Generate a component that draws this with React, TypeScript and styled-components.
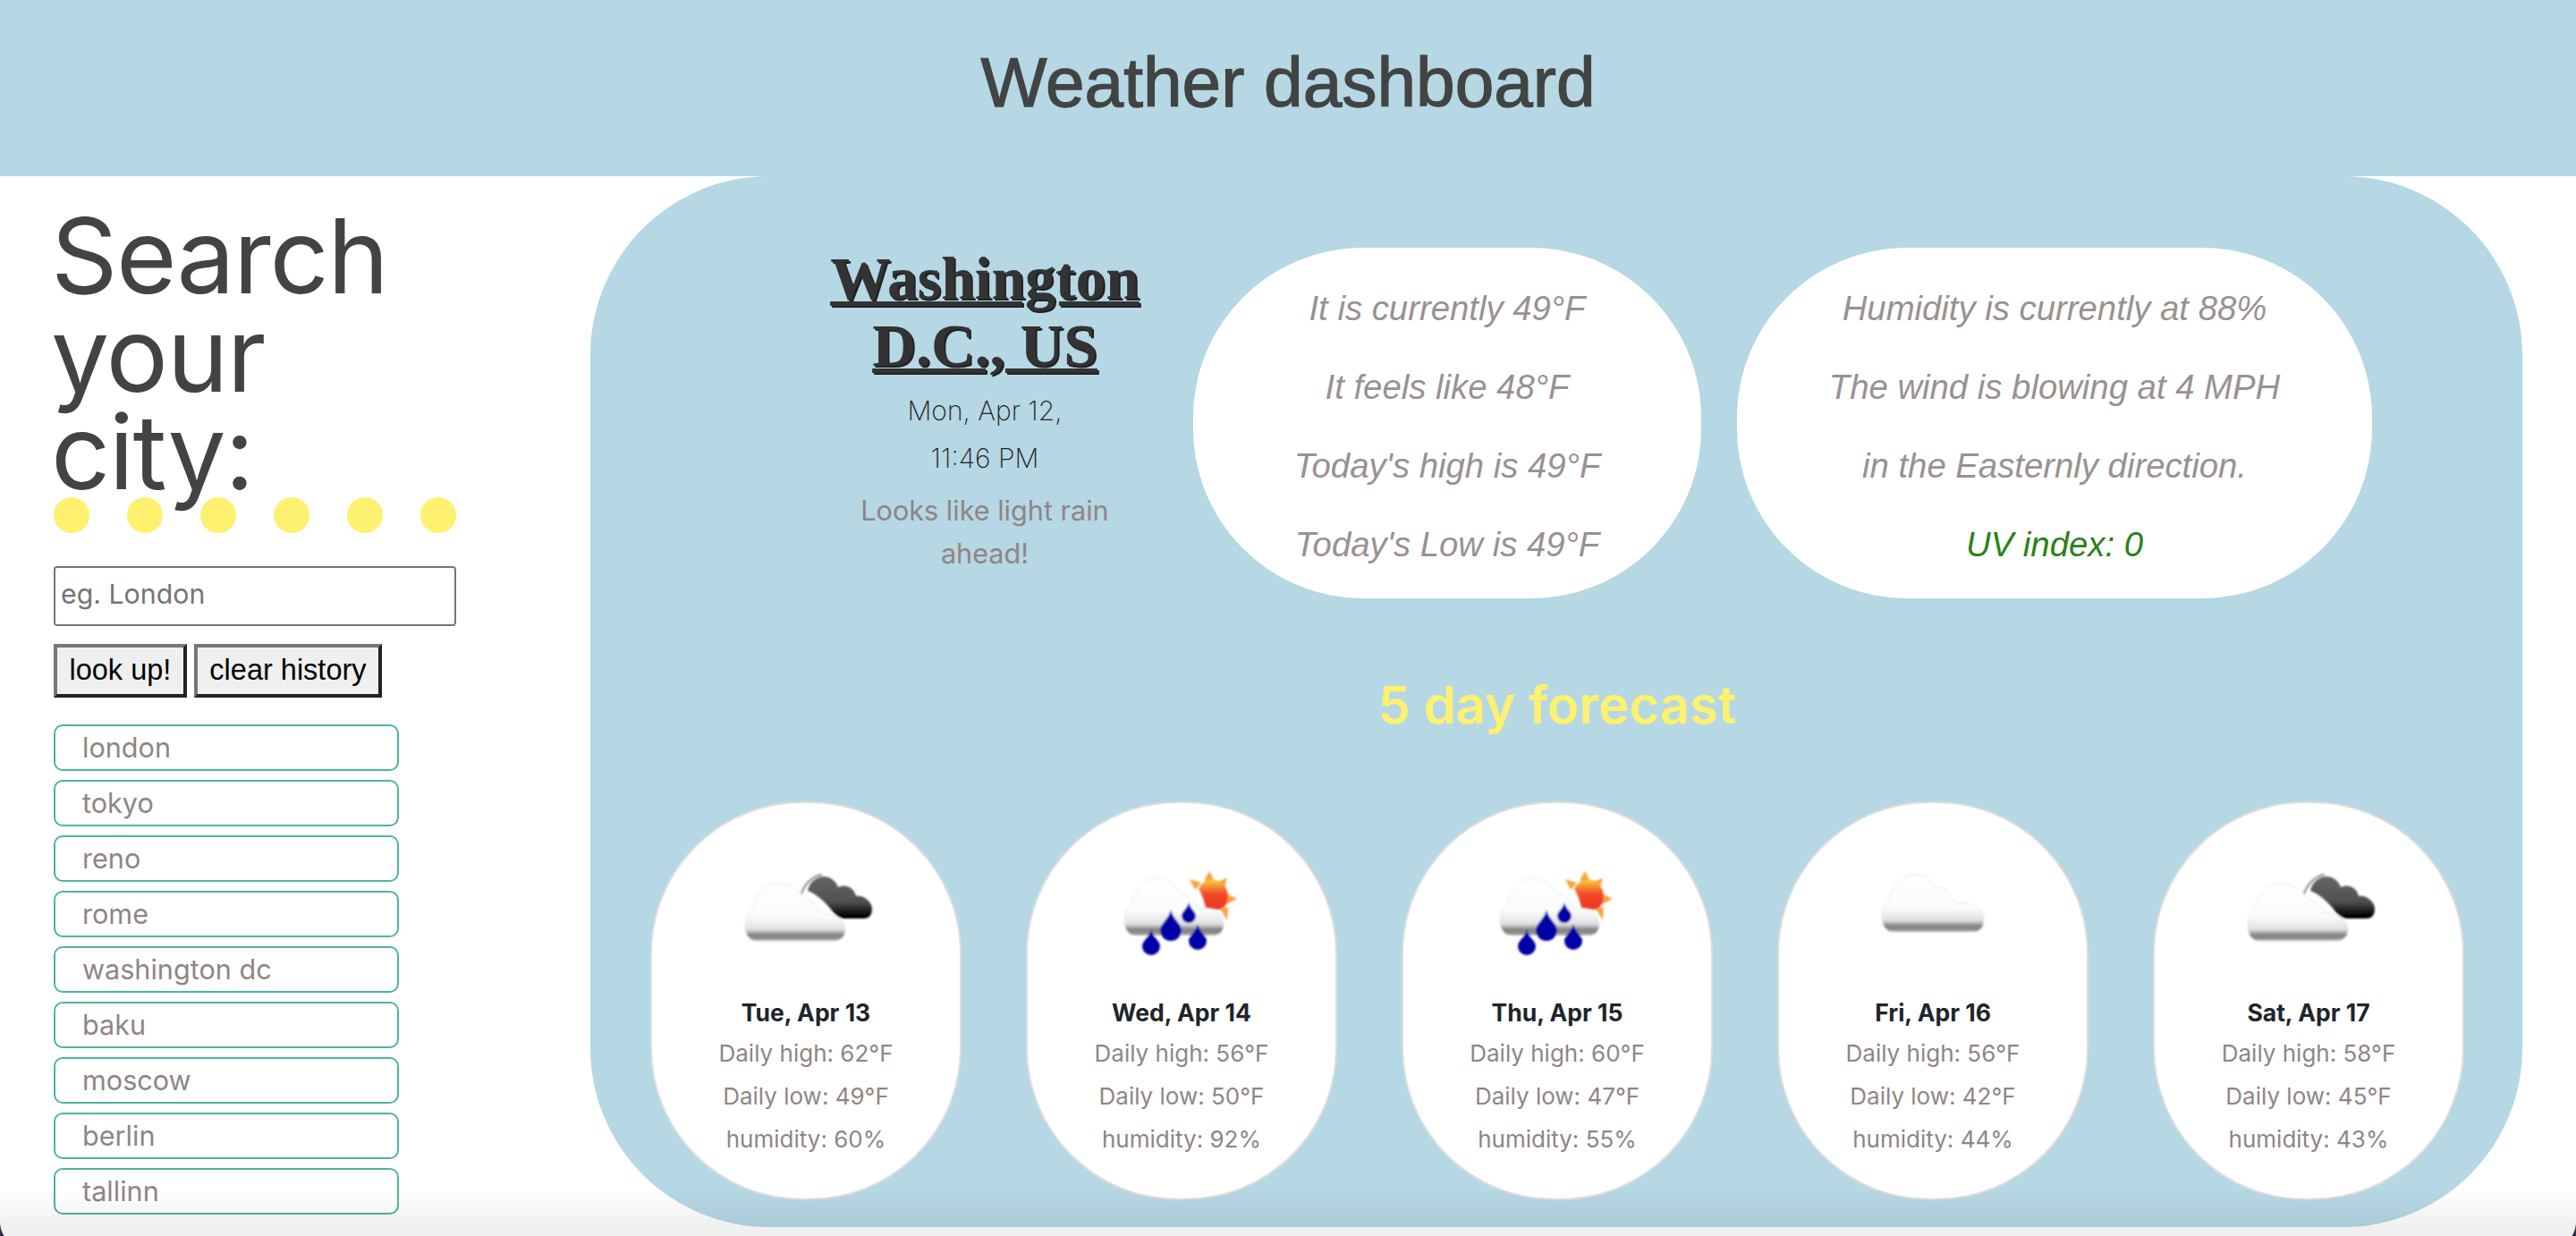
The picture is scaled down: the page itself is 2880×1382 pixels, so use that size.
import React from "react";
import styled, { createGlobalStyle } from "styled-components";

const sky = "#b6d7e4";
const sun = "#fff170";
const muted = "#8f8585";
const helvetica = `"Liberation Sans", Arial, sans-serif`;

const GlobalStyle = createGlobalStyle`
  html, body {
    margin: 0;
    padding: 0;
    height: 100%;
    overflow: hidden;
    background: #fff;
  }
  * {
    box-sizing: border-box;
  }
  body {
    font-family: Inter, "Liberation Sans", sans-serif;
  }
`;

const cities = ["london", "tokyo", "reno", "rome", "washington dc", "baku", "moscow", "berlin", "tallinn"];

type IconKind = "night" | "rain" | "cloud";

const forecast: { date: string; high: number; low: number; humidity: number; icon: IconKind }[] = [
  { date: "Tue, Apr 13", high: 62, low: 49, humidity: 60, icon: "night" },
  { date: "Wed, Apr 14", high: 56, low: 50, humidity: 92, icon: "rain" },
  { date: "Thu, Apr 15", high: 60, low: 47, humidity: 55, icon: "rain" },
  { date: "Fri, Apr 16", high: 56, low: 42, humidity: 44, icon: "cloud" },
  { date: "Sat, Apr 17", high: 58, low: 45, humidity: 43, icon: "night" },
];

const SharedDefs = () => (
  <HiddenSvg width="0" height="0">
    <defs>
      <linearGradient id="whiteCloud" x1="0" y1="0" x2="0" y2="1">
        <stop offset="0" stopColor="#ffffff" />
        <stop offset="0.58" stopColor="#fbfbfb" />
        <stop offset="0.8" stopColor="#e0e0e0" />
        <stop offset="0.9" stopColor="#808080" />
        <stop offset="1" stopColor="#a0a0a0" />
      </linearGradient>
      <linearGradient id="darkCloud" x1="0" y1="0" x2="0" y2="1">
        <stop offset="0" stopColor="#666666" />
        <stop offset="0.6" stopColor="#505050" />
        <stop offset="0.95" stopColor="#000000" />
      </linearGradient>
      <linearGradient id="sunBall" x1="0" y1="0" x2="0" y2="1">
        <stop offset="0" stopColor="#f9d23a" />
        <stop offset="0.5" stopColor="#f0452a" />
        <stop offset="1" stopColor="#ee3a24" />
      </linearGradient>
      <filter id="soft" x="-10%" y="-10%" width="120%" height="120%">
        <feGaussianBlur stdDeviation="1.1" />
      </filter>
    </defs>
  </HiddenSvg>
);

const Drop = ({ x, y, r }: { x: number; y: number; r: number }) => (
  <path
    d={`M${x} ${y - r * 1.9} C${x + r * 0.2} ${y - r} ${x + r} ${y - r * 0.6} ${x + r} ${y} A${r} ${r} 0 0 1 ${x - r} ${y} C${x - r} ${y - r * 0.6} ${x - r * 0.2} ${y - r} ${x} ${y - r * 1.9} Z`}
    fill="#0606a8"
  />
);

const WeatherIcon = ({ kind }: { kind: IconKind }) => {
  if (kind === "cloud") {
    return (
      <IconBox viewBox="0 0 160 110">
        <g filter="url(#soft)">
          <path
            d="M35 76 C27 76 23 68 23 60 C23 50 27 44 31 40 C33 26 46 12 61 12 C72 12 78 18 82 26 C90 24 98 30 100 38 C104 42 106 44 108 44 C124 42 137 50 137 62 C137 72 132 76 126 76 Z"
            fill="url(#whiteCloud)"
            stroke="#e6e6e6"
            strokeWidth="1"
          />
        </g>
      </IconBox>
    );
  }
  if (kind === "rain") {
    return (
      <IconBox viewBox="0 0 160 110">
        <g filter="url(#soft)">
          <path
            d="M28 80 C20 80 16 72 16 64 C16 54 20 48 24 44 C26 30 38 16 52 16 C64 16 72 24 78 32 C88 34 96 42 100 50 C114 48 127 56 127 68 C127 76 122 80 116 80 Z"
            fill="url(#whiteCloud)"
            stroke="#e6e6e6"
            strokeWidth="1"
          />
          <g fill="#f7a23c">
            <polygon points="111,8 105,19 117,19" />
            <polygon points="89,17 102,21 95,29" />
            <polygon points="131,16 120,20 127,29" />
            <polygon points="142,39 130,33 130,45" />
            <polygon points="131,63 123,50 132,48" />
          </g>
          <path
            d="M99 28 C103 19 114 15 122 19 C131 23 133 34 131 42 C129 49 124 51 120 51 L107 49 C105 40 103 34 99 28 Z"
            fill="url(#sunBall)"
          />
          <Drop x={46} y={92} r={10} />
          <Drop x={68} y={74} r={12} />
          <Drop x={88} y={58} r={8} />
          <Drop x={98} y={86} r={10} />
        </g>
      </IconBox>
    );
  }
  return (
    <IconBox viewBox="0 0 160 110">
      <g filter="url(#soft)">
        <path
          d="M82 30 C84 20 92 14 100 14 C108 14 114 20 116 26 C124 22 134 26 136 36 C144 34 154 42 154 50 C154 58 150 61 144 61 L122 61 C114 61 110 52 104 46 C98 40 92 34 82 30 Z"
          fill="url(#darkCloud)"
        />
        <path d="M74 37 C76 26 86 13 98 12" fill="none" stroke="#8a8a8a" strokeWidth="2" />
        <path
          d="M24 86 C16 86 12 78 12 70 C12 60 16 54 20 50 C22 34 34 22 50 22 C62 22 72 28 78 38 C88 42 96 50 100 56 C112 54 124 62 124 74 C124 82 118 86 112 86 Z"
          fill="url(#whiteCloud)"
          stroke="#e6e6e6"
          strokeWidth="1"
        />
      </g>
    </IconBox>
  );
};

export default function App() {
  return (
    <>
      <GlobalStyle />
      <SharedDefs />
      <Page>
        <Header>
          <HeaderTitle>Weather dashboard</HeaderTitle>
        </Header>
        <Body>
          <Sidebar>
            <SearchTitle>Search your city:</SearchTitle>
            <Dots>
              {Array.from({ length: 6 }).map((_, i) => (
                <Dot key={i} />
              ))}
            </Dots>
            <CityInput placeholder="eg. London" />
            <ButtonRow>
              <ActionButton>look up!</ActionButton>
              <ActionButton>clear history</ActionButton>
            </ButtonRow>
            <HistoryList>
              {cities.map((city) => (
                <HistoryItem key={city}>{city}</HistoryItem>
              ))}
            </HistoryList>
          </Sidebar>
          <Panel>
            <CurrentRow>
              <CityBlock>
                <CityName>Washington D.C., US</CityName>
                <DateLine>Mon, Apr 12,</DateLine>
                <DateLine>11:46 PM</DateLine>
                <Summary>Looks like light rain ahead!</Summary>
              </CityBlock>
              <Bubble $width={568}>
                <BubbleLine>It is currently 49°F</BubbleLine>
                <BubbleLine>It feels like 48°F</BubbleLine>
                <BubbleLine>Today's high is 49°F</BubbleLine>
                <BubbleLine>Today's Low is 49°F</BubbleLine>
              </Bubble>
              <Bubble $width={710}>
                <BubbleLine>Humidity is currently at 88%</BubbleLine>
                <BubbleLine>The wind is blowing at 4 MPH</BubbleLine>
                <BubbleLine>in the Easternly direction.</BubbleLine>
                <BubbleLine $good>UV index: 0</BubbleLine>
              </Bubble>
            </CurrentRow>
            <ForecastTitle>5 day forecast</ForecastTitle>
            <CardRow>
              {forecast.map((day) => (
                <Card key={day.date}>
                  <WeatherIcon kind={day.icon} />
                  <CardDate>{day.date}</CardDate>
                  <CardLine>Daily high: {day.high}°F</CardLine>
                  <CardLine>Daily low: {day.low}°F</CardLine>
                  <CardLine>humidity: {day.humidity}%</CardLine>
                </Card>
              ))}
            </CardRow>
          </Panel>
        </Body>
        <WindowEdge />
      </Page>
    </>
  );
}

const HiddenSvg = styled.svg`
  position: absolute;
`;

const Page = styled.div`
  position: relative;
  width: 2880px;
  height: 1382px;
  overflow: hidden;
  background: #fff;
`;

const Header = styled.header`
  height: 197px;
  display: flex;
  justify-content: center;
  align-items: flex-start;
  background: ${sky};
`;

const HeaderTitle = styled.h1`
  margin: 44px 0 0;
  font-family: ${helvetica};
  font-size: 78.4px;
  line-height: 97px;
  font-weight: 400;
  -webkit-text-stroke: 1.3px #424444;
  color: #424444;
`;

const Body = styled.div`
  display: flex;
  padding-right: 60px;
`;

const Sidebar = styled.aside`
  flex: 0 0 660px;
  padding: 35px 0 0 60px;
  display: flex;
  flex-direction: column;
  align-items: flex-start;
`;

const SearchTitle = styled.h2`
  width: 450px;
  margin: 0 0 0 -3px;
  font-size: 116px;
  line-height: 109.5px;
  font-weight: 400;
  letter-spacing: -1.4px;
  color: #424444;
`;

const Dots = styled.div`
  width: 450px;
  margin-top: -5px;
  display: flex;
  justify-content: space-between;
`;

const Dot = styled.span`
  width: 40px;
  height: 40px;
  border-radius: 50%;
  background: ${sun};
`;

const CityInput = styled.input`
  width: 450px;
  height: 67px;
  margin-top: 37px;
  padding: 0 6px 5px;
  border: 2px solid #767676;
  border-radius: 4px;
  font-family: inherit;
  font-size: 30.3px;
  outline: none;
  &::placeholder {
    color: #757575;
  }
`;

const ButtonRow = styled.div`
  display: flex;
  gap: 8px;
  margin-top: 20px;
`;

const ActionButton = styled.button`
  height: 60px;
  padding: 0 13.5px;
  border: 4px solid;
  border-color: #767676 #222 #222 #767676;
  background: #efefef;
  font-family: ${helvetica};
  font-size: 32.5px;
  color: #000;
`;

const HistoryList = styled.ul`
  list-style: none;
  margin: 30px 0 0;
  padding: 0;
  display: flex;
  flex-direction: column;
  gap: 10px;
`;

const HistoryItem = styled.li`
  width: 386px;
  height: 52px;
  padding-left: 30px;
  border: 2px solid #4fb3a0;
  border-radius: 10px;
  font-size: 30.6px;
  line-height: 48px;
  color: ${muted};
`;

const Panel = styled.main`
  flex: 1;
  height: 1175px;
  padding: 80px 65px 0 67px;
  border-radius: 200px;
  background: ${sky};
`;

const CurrentRow = styled.section`
  display: flex;
  align-items: flex-start;
`;

const CityBlock = styled.div`
  flex: none;
  width: 462px;
  margin: -3px 2px 0 143px;
  padding: 0 56px;
  text-align: center;
`;

const CityName = styled.h2`
  margin: 0 0 9px;
  font-family: "Liberation Serif", serif;
  font-size: 67.6px;
  line-height: 75px;
  font-weight: 700;
  text-decoration: underline;
  text-decoration-thickness: 5px;
  text-shadow: 2px 2px 0 #222;
  color: #333;
`;

const DateLine = styled.p`
  margin: 0;
  font-size: 30px;
  line-height: 53px;
  font-weight: 200;
  color: #222;
`;

const Summary = styled.p`
  margin: 8px 0 0;
  font-size: 30.6px;
  line-height: 48px;
  color: ${muted};
`;

const Bubble = styled.div<{ $width: number }>`
  width: ${(p) => p.$width}px;
  height: 392px;
  flex: none;
  padding-top: 24px;
  border-radius: 190px;
  background: #fff;
  text-align: center;
  & + & {
    margin-left: 40px;
  }
`;

const BubbleLine = styled.p<{ $good?: boolean }>`
  margin: 0;
  font-family: ${helvetica};
  font-size: 38.3px;
  line-height: 88px;
  font-style: italic;
  color: ${(p) => (p.$good ? "#2a8218" : "#999191")};
`;

const ForecastTitle = styled.h3`
  margin: 83px 0 0;
  text-align: center;
  font-size: 58px;
  line-height: 73px;
  font-weight: 600;
  color: ${sun};
`;

const CardRow = styled.section`
  margin-top: 71px;
  display: flex;
  justify-content: space-between;
`;

const Card = styled.article`
  width: 348px;
  height: 446px;
  padding-top: 68px;
  border: 2px solid #ddd;
  border-radius: 170px;
  background: #fff;
  display: flex;
  flex-direction: column;
  align-items: center;
`;

const IconBox = styled.svg`
  width: 160px;
  height: 110px;
  margin-bottom: 38px;
  flex: none;
`;

const CardDate = styled.h4`
  margin: 0 0 10px;
  font-size: 26.5px;
  line-height: 36px;
  font-weight: 700;
  color: #212529;
`;

const CardLine = styled.p`
  margin: 0 0 12px;
  font-size: 26px;
  line-height: 36px;
  color: ${muted};
`;

const WindowEdge = styled.div`
  position: absolute;
  left: 0;
  right: 0;
  bottom: 0;
  height: 52px;
  pointer-events: none;
  background: linear-gradient(to bottom, rgba(0, 0, 0, 0), rgba(0, 0, 0, 0.06) 80%, rgba(0, 0, 0, 0.06));
  &::before,
  &::after {
    content: "";
    position: absolute;
    bottom: 0;
    width: 8px;
    height: 16px;
  }
  &::before {
    left: 0;
    background: radial-gradient(circle at 30px 0, transparent 29.5px, #2b3147 30.5px);
  }
  &::after {
    right: 0;
    background: radial-gradient(circle at -22px 0, transparent 29.5px, #2b3147 30.5px);
  }
`;
